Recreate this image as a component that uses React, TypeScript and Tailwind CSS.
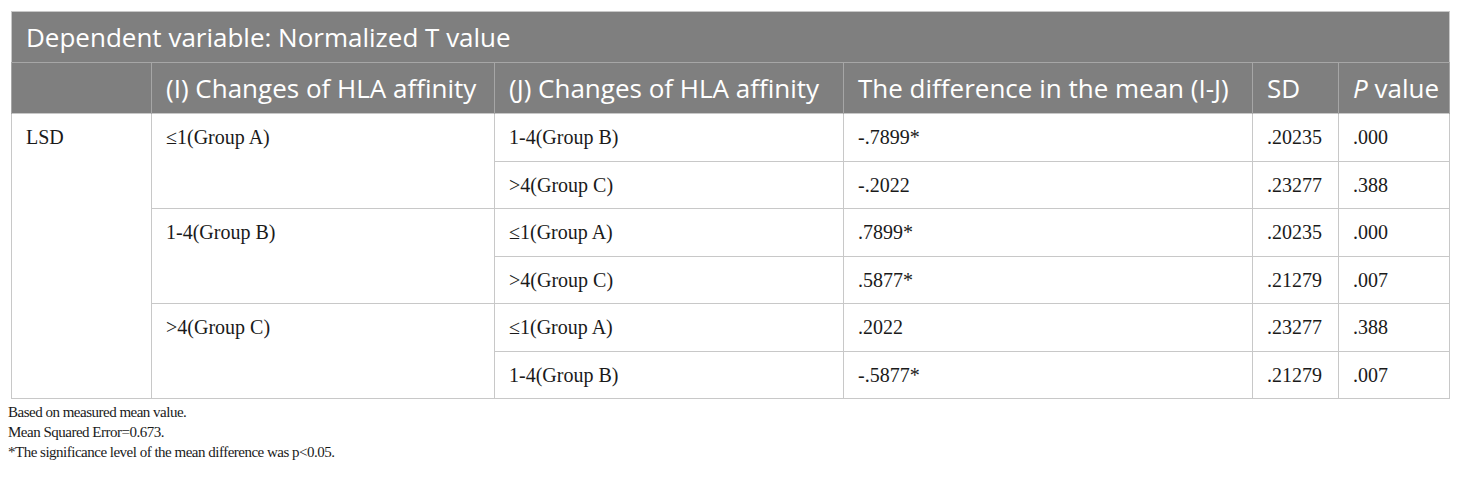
const rows = [
  { i: "≤1(Group A)", span: 2, j: "1-4(Group B)", diff: "-.7899*", sd: ".20235", p: ".000" },
  { j: ">4(Group C)", diff: "-.2022", sd: ".23277", p: ".388" },
  { i: "1-4(Group B)", span: 2, j: "≤1(Group A)", diff: ".7899*", sd: ".20235", p: ".000" },
  { j: ">4(Group C)", diff: ".5877*", sd: ".21279", p: ".007" },
  { i: ">4(Group C)", span: 2, j: "≤1(Group A)", diff: ".2022", sd: ".23277", p: ".388" },
  { j: "1-4(Group B)", diff: "-.5877*", sd: ".21279", p: ".007" },
];

const serif = "font-['Liberation_Serif','Times_New_Roman',serif]";
const td = "border border-[#c8c8c8] px-[14px] align-top pt-[10px] text-[20px] leading-[26px] text-[#1a1a1a]";
const th = "border-x border-[#a6a6a6] px-[14px] text-left font-normal text-[26px] text-white whitespace-nowrap";

export default function App() {
  return (
    <div className="min-h-screen bg-white px-[11px] pt-[11px]">
      <table className="w-[1438px] table-fixed border-collapse border border-[#c8c8c8]">
        <colgroup>
          <col className="w-[140px]" />
          <col className="w-[343px]" />
          <col className="w-[349px]" />
          <col className="w-[409px]" />
          <col className="w-[86px]" />
          <col className="w-[111px]" />
        </colgroup>
        <thead className="bg-[#7f7f7f] font-['Open_Sans',sans-serif]">
          <tr className="h-[51px] border-b border-[#a6a6a6]">
            <th colSpan={6} className="px-[14px] text-left text-[26px] font-normal text-white">
              Dependent variable: Normalized T value
            </th>
          </tr>
          <tr className="h-[51px]">
            <th className={th}></th>
            <th className={th}>(I) Changes of HLA affinity</th>
            <th className={th}>(J) Changes of HLA affinity</th>
            <th className={th}>The difference in the mean (I-J)</th>
            <th className={th}>SD</th>
            <th className={th}>
              <i>P</i> value
            </th>
          </tr>
        </thead>
        <tbody className={serif}>
          {rows.map((r, k) => (
            <tr key={k} className={k % 2 === 0 ? "h-[48px]" : "h-[47px]"}>
              {k === 0 && (
                <td rowSpan={6} className={td}>
                  LSD
                </td>
              )}
              {r.i && (
                <td rowSpan={r.span} className={td}>
                  {r.i}
                </td>
              )}
              <td className={td}>{r.j}</td>
              <td className={td}>{r.diff}</td>
              <td className={td}>{r.sd}</td>
              <td className={td}>{r.p}</td>
            </tr>
          ))}
        </tbody>
      </table>
      <div className={`${serif} -ml-[3px] pt-[3px] text-[15px] leading-[20px] tracking-[-0.5px] text-[#1a1a1a]`}>
        <p>Based on measured mean value.</p>
        <p>Mean Squared Error=0.673.</p>
        <p>*The significance level of the mean difference was p&lt;0.05.</p>
      </div>
    </div>
  );
}
